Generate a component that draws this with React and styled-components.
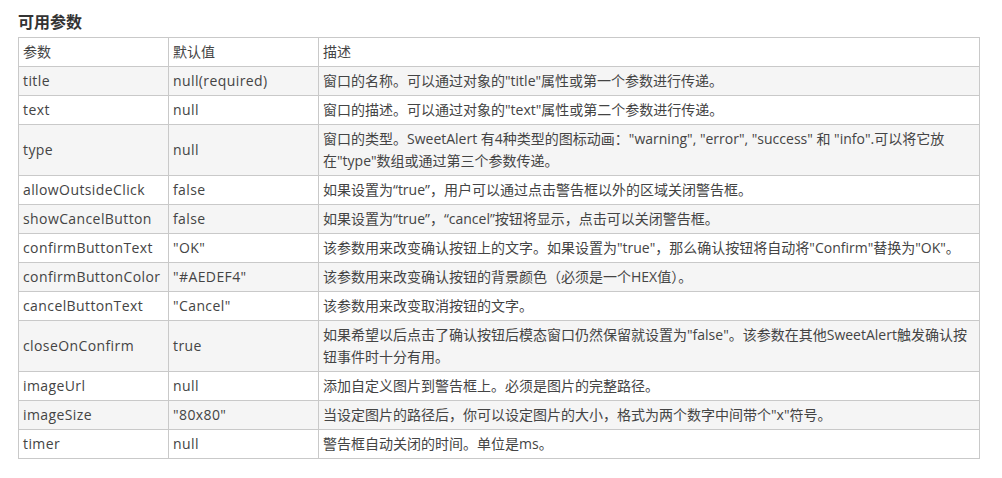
import React from "react";
import styled, { createGlobalStyle } from "styled-components";

const Global = createGlobalStyle`
  html, body { margin: 0; padding: 0; background: #fff; }
  body {
    font-family: "Open Sans", "Noto Sans CJK SC", sans-serif;
    color: #444;
  }
`;

const Page = styled.div`
  padding: 10px 23px 0 18px;
`;

const Heading = styled.h3`
  margin: 0 0 5px 0;
  font-size: 16px;
  line-height: 22px;
  font-weight: bold;
  color: #333;
  font-family: "Noto Sans CJK SC", sans-serif;
`;

const Table = styled.table`
  width: 962px;
  border-collapse: collapse;
  table-layout: fixed;
  font-size: 14px;
  color: #444;
`;

const Col = styled.col`
  width: ${(p) => p.$w};
`;

const Row = styled.tr`
  background: ${(p) => (p.$striped ? "#f5f5f5" : "#fff")};
`;

const Cell = styled.td`
  border: 1px solid #c9c9c9;
  padding: 3px 4px;
  line-height: 22px;
  vertical-align: middle;
  font-family: "Open Sans", "Noto Sans CJK SC", sans-serif;
  letter-spacing: ${(p) => (p.$code ? "0.4px" : "0")};
`;

const rows = [
  ["title", "null(required)", "窗口的名称。可以通过对象的\"title\"属性或第一个参数进行传递。"],
  ["text", "null", "窗口的描述。可以通过对象的\"text\"属性或第二个参数进行传递。"],
  ["type", "null", "窗口的类型。SweetAlert 有4种类型的图标动画：\"warning\", \"error\", \"success\" 和 \"info\".可以将它放在\"type\"数组或通过第三个参数传递。"],
  ["allowOutsideClick", "false", "如果设置为“true”，用户可以通过点击警告框以外的区域关闭警告框。"],
  ["showCancelButton", "false", "如果设置为“true”，“cancel”按钮将显示，点击可以关闭警告框。"],
  ["confirmButtonText", "\"OK\"", "该参数用来改变确认按钮上的文字。如果设置为\"true\"，那么确认按钮将自动将\"Confirm\"替换为\"OK\"。"],
  ["confirmButtonColor", "\"#AEDEF4\"", "该参数用来改变确认按钮的背景颜色（必须是一个HEX值）。"],
  ["cancelButtonText", "\"Cancel\"", "该参数用来改变取消按钮的文字。"],
  ["closeOnConfirm", "true", "如果希望以后点击了确认按钮后模态窗口仍然保留就设置为\"false\"。该参数在其他SweetAlert触发确认按钮事件时十分有用。"],
  ["imageUrl", "null", "添加自定义图片到警告框上。必须是图片的完整路径。"],
  ["imageSize", "\"80x80\"", "当设定图片的路径后，你可以设定图片的大小，格式为两个数字中间带个\"x\"符号。"],
  ["timer", "null", "警告框自动关闭的时间。单位是ms。"],
];

export default function App() {
  return (
    <>
      <Global />
      <Page>
        <Heading>可用参数</Heading>
        <Table>
          <colgroup>
            <Col $w="150px" />
            <Col $w="150px" />
            <Col $w="661px" />
          </colgroup>
          <tbody>
            <Row>
              <Cell>参数</Cell>
              <Cell>默认值</Cell>
              <Cell>描述</Cell>
            </Row>
            {rows.map((r, i) => (
              <Row key={r[0]} $striped={i % 2 === 0}>
                <Cell $code>{r[0]}</Cell>
                <Cell $code>{r[1]}</Cell>
                <Cell>{r[2]}</Cell>
              </Row>
            ))}
          </tbody>
        </Table>
      </Page>
    </>
  );
}
